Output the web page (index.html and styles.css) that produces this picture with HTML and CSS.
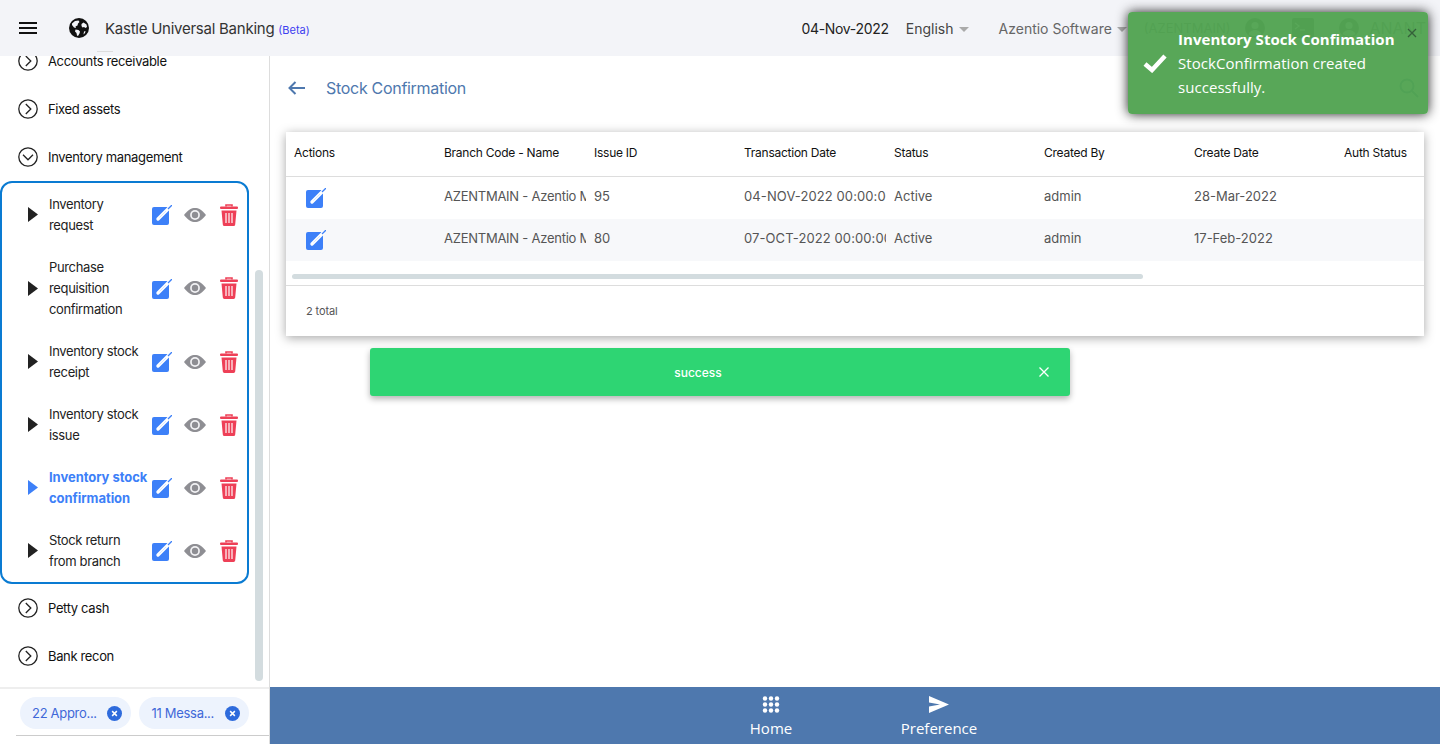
FILE: index.html
```html
<!DOCTYPE html>
<html lang="en">
<head>
<meta charset="UTF-8">
<meta name="viewport" content="width=device-width, initial-scale=1.0">
<title>Stock Confirmation</title>
<link rel="stylesheet" href="styles.css">
</head>
<body>
<!-- Shared icons -->
<svg class="defs" width="0" height="0">
<symbol id="i-edit" viewBox="0 0 20 20">
<rect x="0" y="2" width="17" height="18" rx="2" fill="#3d80f8"/>
<path d="M6 14L17 3" stroke="#fff" stroke-width="3.400" stroke-linecap="round" fill="none"/>
<path d="M7.500 12.500L14 6" stroke="#cfe0fd" stroke-width="0.800" fill="none"/>
<path d="M16 4L20 0" stroke="#3d80f8" stroke-width="1.300" fill="none"/>
</symbol>
<symbol id="i-eye" viewBox="0 0 22 14">
<path d="M0 7C4 1.800 7.500 0 11 0s7 1.800 11 7c-4 5.200-7.500 7-11 7S4 12.200 0 7z" fill="#8e8e93"/>
<circle cx="11" cy="7" r="4.900" fill="#f2f2f4"/>
<circle cx="11" cy="7" r="3.200" fill="#8e8e93"/>
</symbol>
<symbol id="i-trash" viewBox="0 0 18 22">
<path d="M6 2.500V1h6v1.500" stroke="#ee4057" stroke-width="1.600" fill="none"/>
<rect x="0" y="2.500" width="18" height="2.600" rx="1" fill="#ee4057"/>
<path d="M1.500 6.500h15l-1.300 14a1.600 1.600 0 0 1-1.600 1.500H4.400a1.600 1.600 0 0 1-1.600-1.500z" fill="#ee4057"/>
<path d="M6 9v10M9 9v10M12 9v10" stroke="#fbd5da" stroke-width="1.500" fill="none"/>
</symbol>
<symbol id="i-right" viewBox="0 0 20 20">
<circle cx="10" cy="10" r="9.200" stroke="#222" stroke-width="1.300" fill="none"/>
<path d="M7.800 5l5 5-5 5" stroke="#222" stroke-width="1.300" fill="none"/>
</symbol>
<symbol id="i-down" viewBox="0 0 20 20">
<circle cx="10" cy="10" r="9.200" stroke="#222" stroke-width="1.300" fill="none"/>
<path d="M5 7.800l5 5 5-5" stroke="#222" stroke-width="1.300" fill="none"/>
</symbol>
<symbol id="i-play" viewBox="0 0 10 15">
<path d="M0 0l10 7.500L0 15z" fill="currentColor"/>
</symbol>
<symbol id="i-chipx" viewBox="0 0 14 14">
<circle cx="7" cy="7" r="7" fill="#2e6bdc"/>
<path d="M4.800 4.800l4.400 4.400M9.200 4.800l-4.400 4.400" stroke="#fff" stroke-width="1.400"/>
</symbol>
<symbol id="i-user" viewBox="0 0 20 20">
<circle cx="10" cy="10" r="10" fill="#555"/>
<circle cx="10" cy="7.500" r="3.600" fill="#f3f4f8"/>
<path d="M3.500 16c1.500-3 4-4 6.500-4s5 1 6.500 4c-3 3-10 3-13 0z" fill="#f3f4f8"/>
</symbol>
</svg>

<header class="topbar">
<button class="menu-btn" aria-label="Menu"><span></span><span></span><span></span></button>
<svg class="globe" viewBox="0 0 20 20" width="20" height="20">
<circle cx="10" cy="10" r="10" fill="#111"/>
<path d="M3 5.500l3-2.500 3.500-.5 1 1.500-1.500 1.500-.5 2-2 1 .5 1.500-2-.5-2-2.500z" fill="#f3f4f8"/>
<path d="M6.500 11.500l3 .5 1.500 1.500-.5 2-1.500 2.500-1-.5-.5-2.500-1.500-1.500z" fill="#f3f4f8"/>
<path d="M12.500 6l2-1.500 3 2 .5 2.500-1.500 1-1.500-1-1.500.5-1-1.500z" fill="#f3f4f8"/>
<path d="M15 13.500l1.500-.5-.5 2-1.500 1.500z" fill="#f3f4f8"/>
</svg>
<div class="brand">Kastle Universal Banking <small>(Beta)</small></div>
<span class="tick"></span>
<div class="top-right">
<span class="date">04-Nov-2022</span>
<span class="drop lang">English<i class="caret"></i></span>
<span class="drop company">Azentio Software<i class="caret"></i></span>
<span class="branch">(AZENTMAIN)</span>
<svg class="top-icon" width="20" height="20"><use href="#i-user"/></svg>
<svg class="top-icon term" viewBox="0 0 22 20" width="22" height="20">
<rect width="22" height="20" rx="2" fill="#555"/>
<path d="M3 5l4 3-4 3M8 12h5" stroke="#f3f4f8" stroke-width="1.300" fill="none"/>
</svg>
<svg class="top-icon last" width="20" height="20"><use href="#i-user"/></svg>
<span class="username">ANANT</span>
</div>
</header>

<div class="layout">
<aside class="sidebar">
<div class="side-scroll">
<ul class="menu">
<li class="menu-item"><svg width="20" height="20"><use href="#i-right"/></svg>Accounts receivable</li>
<li class="menu-item"><svg width="20" height="20"><use href="#i-right"/></svg>Fixed assets</li>
<li class="menu-item"><svg width="20" height="20"><use href="#i-down"/></svg>Inventory management</li>
<li class="submenu">
<div class="sub-item">
<svg class="play" width="10" height="15"><use href="#i-play"/></svg>
<span class="sub-name">Inventory<br>request</span>
<svg class="act-edit" width="20" height="20"><use href="#i-edit"/></svg>
<svg class="act-eye" width="22" height="14"><use href="#i-eye"/></svg>
<svg class="act-trash" width="18" height="22"><use href="#i-trash"/></svg>
</div>
<div class="sub-item">
<svg class="play" width="10" height="15"><use href="#i-play"/></svg>
<span class="sub-name">Purchase<br>requisition<br>confirmation</span>
<svg class="act-edit" width="20" height="20"><use href="#i-edit"/></svg>
<svg class="act-eye" width="22" height="14"><use href="#i-eye"/></svg>
<svg class="act-trash" width="18" height="22"><use href="#i-trash"/></svg>
</div>
<div class="sub-item">
<svg class="play" width="10" height="15"><use href="#i-play"/></svg>
<span class="sub-name">Inventory stock<br>receipt</span>
<svg class="act-edit" width="20" height="20"><use href="#i-edit"/></svg>
<svg class="act-eye" width="22" height="14"><use href="#i-eye"/></svg>
<svg class="act-trash" width="18" height="22"><use href="#i-trash"/></svg>
</div>
<div class="sub-item">
<svg class="play" width="10" height="15"><use href="#i-play"/></svg>
<span class="sub-name">Inventory stock<br>issue</span>
<svg class="act-edit" width="20" height="20"><use href="#i-edit"/></svg>
<svg class="act-eye" width="22" height="14"><use href="#i-eye"/></svg>
<svg class="act-trash" width="18" height="22"><use href="#i-trash"/></svg>
</div>
<div class="sub-item active">
<svg class="play" width="10" height="15"><use href="#i-play"/></svg>
<span class="sub-name">Inventory stock<br>confirmation</span>
<svg class="act-edit" width="20" height="20"><use href="#i-edit"/></svg>
<svg class="act-eye" width="22" height="14"><use href="#i-eye"/></svg>
<svg class="act-trash" width="18" height="22"><use href="#i-trash"/></svg>
</div>
<div class="sub-item">
<svg class="play" width="10" height="15"><use href="#i-play"/></svg>
<span class="sub-name">Stock return<br>from branch</span>
<svg class="act-edit" width="20" height="20"><use href="#i-edit"/></svg>
<svg class="act-eye" width="22" height="14"><use href="#i-eye"/></svg>
<svg class="act-trash" width="18" height="22"><use href="#i-trash"/></svg>
</div>
</li>
<li class="menu-item"><svg width="20" height="20"><use href="#i-right"/></svg>Petty cash</li>
<li class="menu-item"><svg width="20" height="20"><use href="#i-right"/></svg>Bank recon</li>
</ul>
<div class="side-thumb"></div>
</div>
<div class="side-foot">
<span class="chip">22 Appro...<svg width="15" height="15"><use href="#i-chipx"/></svg></span>
<span class="chip">11 Messa...<svg width="15" height="15"><use href="#i-chipx"/></svg></span>
</div>
</aside>

<div class="content">
<main class="page">
<div class="page-title">
<svg class="back" viewBox="0 0 18 14" width="18" height="14">
<path d="M17 7H2M7.500 1L1.500 7l6 6" stroke="#4e78ae" stroke-width="2" fill="none"/>
</svg>
<h1>Stock Confirmation</h1>
<svg class="search" viewBox="0 0 20 20" width="20" height="20">
<circle cx="8" cy="8" r="6.500" stroke="#4e78ae" stroke-width="2" fill="none"/>
<path d="M13 13l6 6" stroke="#4e78ae" stroke-width="2"/>
</svg>
</div>

<section class="card">
<div class="table-wrap">
<table>
<thead>
<tr>
<th>Actions</th>
<th>Branch Code - Name</th>
<th>Issue ID</th>
<th>Transaction Date</th>
<th>Status</th>
<th>Created By</th>
<th>Create Date</th>
<th>Auth Status</th>
</tr>
</thead>
<tbody>
<tr>
<td><svg class="row-edit" width="20" height="20"><use href="#i-edit"/></svg></td>
<td><div class="clip name">AZENTMAIN - Azentio Main Branch</div></td>
<td><div class="clip">95</div></td>
<td><div class="clip stamp">04-NOV-2022 00:00:00</div></td>
<td><div class="clip">Active</div></td>
<td><div class="clip">admin</div></td>
<td><div class="clip">28-Mar-2022</div></td>
<td></td>
</tr>
<tr>
<td><svg class="row-edit" width="20" height="20"><use href="#i-edit"/></svg></td>
<td><div class="clip name">AZENTMAIN - Azentio Main Branch</div></td>
<td><div class="clip">80</div></td>
<td><div class="clip stamp">07-OCT-2022 00:00:00</div></td>
<td><div class="clip">Active</div></td>
<td><div class="clip">admin</div></td>
<td><div class="clip">17-Feb-2022</div></td>
<td></td>
</tr>
</tbody>
</table>
</div>
<div class="h-scroll"><div class="h-thumb"></div></div>
<div class="card-foot">2 total</div>
</section>
</main>

<nav class="bottom-nav">
<a class="nav-link">
<svg viewBox="0 0 18 17" width="18" height="17" fill="#fff">
<circle cx="3" cy="2.500" r="2.200"/><circle cx="9" cy="2.500" r="2.200"/><circle cx="15" cy="2.500" r="2.200"/>
<circle cx="3" cy="8.500" r="2.200"/><circle cx="9" cy="8.500" r="2.200"/><circle cx="15" cy="8.500" r="2.200"/>
<circle cx="3" cy="14.500" r="2.200"/><circle cx="9" cy="14.500" r="2.200"/><circle cx="15" cy="14.500" r="2.200"/>
</svg>
Home
</a>
<a class="nav-link">
<svg viewBox="0 0 20 17" width="20" height="17" fill="#fff">
<path d="M0 0l20 8.500L0 17v-6.500l11-2L0 6.500z"/>
</svg>
Preference
</a>
</nav>
</div>
</div>

<!-- Notifications -->
<div class="snackbar"><span>success</span>
<svg class="snack-close" viewBox="0 0 10 10" width="10" height="10">
<path d="M.5.500l9 9M9.500.500l-9 9" stroke="#fff" stroke-width="1.300"/>
</svg>
</div>

<div class="toast">
<svg class="toast-check" viewBox="0 0 24 20" width="24" height="20">
<path d="M2 11l7 6L22 3" stroke="#fff" stroke-width="4.500" fill="none"/>
</svg>
<div>
<div class="toast-title">Inventory Stock Confimation</div>
<div class="toast-msg">StockConfirmation created successfully.</div>
</div>
<svg class="toast-close" viewBox="0 0 10 10" width="10" height="10">
<path d="M1 1l8 8M9 1l-8 8" stroke="#35603a" stroke-width="1.300"/>
</svg>
</div>
</body>
</html>
```

FILE: styles.css
```css
* {
box-sizing: border-box;
}
html, body {
height: 100%;
}
body {
margin: 0;
height: 744px;
overflow: hidden;
font-family: Inter, "Liberation Sans", sans-serif;
font-size: 13px;
color: #222;
background-color: #fff;
display: flex;
flex-direction: column;
position: relative;
}
.defs {
position: absolute;
}
svg {
display: block;
flex: none;
}

/* Top bar */
.topbar {
height: 56px;
flex: none;
background-color: #f3f4f8;
display: flex;
align-items: center;
padding-left: 19px;
position: relative;
z-index: 2;
}
.menu-btn {
width: 18px;
height: 12px;
padding: 0;
border: none;
background: none;
display: flex;
flex-direction: column;
justify-content: space-between;
margin-right: 32px;
}
.menu-btn span {
display: block;
height: 2px;
background-color: #111;
}
.brand {
margin-left: 16px;
font-size: 15px;
letter-spacing: -0.25px;
color: #333;
}
.brand small {
font-size: 11px;
letter-spacing: 0;
color: #4040f0;
}
.tick {
position: absolute;
left: 97px;
top: 51px;
width: 16px;
height: 1px;
background-color: #ddd;
}
.top-right {
margin-left: auto;
display: flex;
align-items: center;
padding-right: 14px;
white-space: nowrap;
}
.date {
font-size: 14px;
letter-spacing: -0.3px;
color: #222;
}
.drop {
font-size: 14px;
display: flex;
align-items: center;
}
.lang {
margin-left: 17px;
color: #444;
}
.company {
margin-left: 30px;
color: #666;
}
.caret {
margin-left: 5px;
margin-top: 2px;
border-left: 5px solid transparent;
border-right: 5px solid transparent;
border-top: 5px solid #aaa;
}
.branch {
margin-left: 17px;
font-size: 13px;
color: #666;
}
.top-icon {
margin-left: 27px;
}
.branch + .top-icon {
margin-left: 15px;
}
.top-icon.last {
margin-left: 25px;
}
.username {
margin-left: 10px;
font-size: 16px;
color: #666;
}

/* Layout */
.layout {
flex: 1;
display: flex;
min-height: 0;
}
.sidebar {
width: 270px;
flex: none;
border-right: 1px solid #ddd;
display: flex;
flex-direction: column;
}
.side-scroll {
flex: 1;
min-height: 0;
overflow: hidden;
position: relative;
}
.menu {
list-style: none;
margin: -19px 0 0;
padding: 0;
}
.menu-item {
height: 48px;
padding-left: 18px;
display: flex;
align-items: center;
gap: 10px;
font-size: 13px;
letter-spacing: -0.35px;
color: #111;
}
.submenu {
width: 249px;
margin-left: 0;
border: 2px solid #0a7bd2;
border-radius: 12px;
}
.sub-item {
display: flex;
align-items: center;
padding: 10.5px 0 10.5px 26px;
line-height: 21px;
position: relative;
color: #222;
}
.sub-item .play {
color: #222;
}
.sub-item.active .play {
color: #3d80f8;
}
.sub-name {
width: 102px;
margin-left: 11px;
font-size: 13px;
letter-spacing: -0.35px;
white-space: nowrap;
}
.sub-item.active .sub-name {
color: #3d80f8;
font-weight: 700;
letter-spacing: -0.05px;
}
.act-edit {
margin-top: 1px;
margin-left: 1px;
}
.act-eye {
margin-left: 12px;
}
.act-trash {
margin-left: 14px;
}
.side-thumb {
position: absolute;
left: 255px;
top: 214px;
width: 8px;
height: 411px;
border-radius: 4px;
background-color: #d3dcdf;
}
.side-foot {
height: 57px;
flex: none;
border-top: 2px solid #eee;
padding: 8px 0 0 20px;
display: flex;
gap: 8px;
align-items: flex-start;
position: relative;
}
.side-foot::after {
content: "";
position: absolute;
left: 16px;
right: 0;
top: 46px;
height: 1px;
background-color: #ccc;
}
.chip {
height: 32px;
width: 110.5px;
padding: 0 9px 0 12px;
border-radius: 16px;
background-color: #edf3fd;
color: #3f68d8;
font-size: 13px;
letter-spacing: -0.3px;
display: flex;
align-items: center;
justify-content: space-between;
white-space: nowrap;
}
.chip:last-child {
padding-left: 13px;
}

/* Main content */
.content {
flex: 1;
min-width: 0;
display: flex;
flex-direction: column;
}
.page {
flex: 1;
min-height: 0;
padding: 0 16px;
}
.page-title {
height: 64px;
margin-bottom: 12px;
display: flex;
align-items: center;
padding-left: 2px;
padding-right: 5px;
}
.page-title h1 {
margin: 0 0 0 20px;
font-size: 16px;
font-weight: 400;
letter-spacing: -0.3px;
color: #4e78ae;
flex: 1;
}
.card {
background-color: #fff;
box-shadow: 0 2px 10px rgba(0, 0, 0, 0.35);
height: 204px;
}
.table-wrap {
overflow: hidden;
}
table {
width: 1200px;
border-collapse: separate;
border-spacing: 0;
table-layout: fixed;
}
th, td {
padding: 0 0 0 8px;
text-align: left;
white-space: nowrap;
}
th {
height: 45px;
padding-bottom: 3px;
font-size: 12px;
font-weight: 400;
letter-spacing: -0.25px;
color: #111;
border-bottom: 1px solid #ddd;
}
td {
height: 42px;
font-size: 13px;
color: #555;
}
tbody tr:nth-child(even) {
background-color: #f7f8fa;
}
.clip {
overflow: hidden;
margin-bottom: 4px;
}
.clip.name {
letter-spacing: -0.25px;
}
.clip.stamp {
letter-spacing: 0.1px;
}
.row-edit {
margin-left: 12px;
}
.h-scroll {
height: 25px;
padding: 13px 6px 0;
border-bottom: 1px solid #ddd;
}
.h-thumb {
width: 851px;
height: 5px;
border-radius: 3px;
background-color: #d3dcdf;
}
.card-foot {
padding: 18px 20px;
font-size: 11px;
letter-spacing: -0.1px;
color: #555;
}
.bottom-nav {
height: 57px;
flex: none;
background-color: #4e78ae;
display: flex;
padding-left: 472px;
gap: 110px;
}
.nav-link {
width: 58px;
padding-top: 9px;
display: flex;
flex-direction: column;
align-items: center;
gap: 5px;
font-family: "Open Sans", sans-serif;
font-size: 15px;
color: #fff;
white-space: nowrap;
}

/* Notifications */
.snackbar {
position: absolute;
left: 370px;
top: 348px;
width: 700px;
height: 48px;
border-radius: 3px;
background-color: #2ed573;
color: #fff;
font-size: 12px;
font-weight: 500;
box-shadow: 0 3px 6px rgba(0, 0, 0, 0.3);
display: flex;
align-items: center;
justify-content: center;
z-index: 3;
padding-right: 44px;
}
.snack-close {
position: absolute;
right: 21px;
top: 19px;
}
.toast {
position: absolute;
left: 1128px;
top: 12px;
width: 300px;
height: 102px;
border-radius: 4px;
background-color: rgba(81, 163, 81, 0.96);
box-shadow: 0 0 12px #222;
color: #fff;
font-family: "Open Sans", sans-serif;
font-size: 15px;
letter-spacing: 0.05px;
line-height: 24px;
display: flex;
align-items: center;
padding: 0 15px;
gap: 11px;
z-index: 4;
}
.toast-title {
font-weight: 700;
}
.toast-close {
position: absolute;
right: 11px;
top: 16px;
}
```
